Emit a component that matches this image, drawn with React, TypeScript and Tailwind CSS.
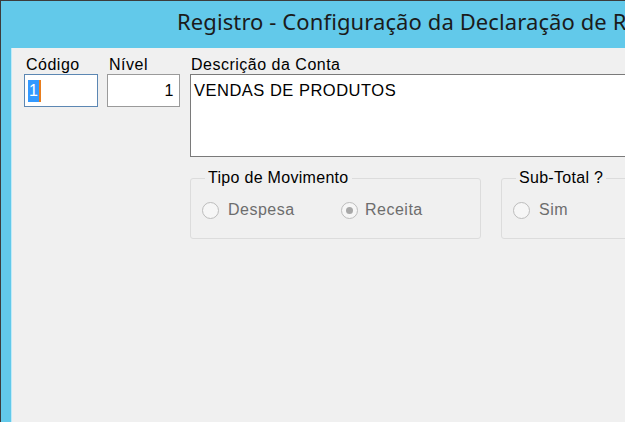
export default function App() {
  const radio = (checked: boolean) => (
    <span className="w-[17px] h-[17px] rounded-full border border-[#bcbcbc] bg-[#f6f6f6] flex items-center justify-center shrink-0">
      {checked && <span className="w-[7px] h-[7px] rounded-full bg-[#a8a8a8]" />}
    </span>
  );
  return (
    <div className="w-[625px] h-[422px] overflow-hidden bg-[#62c9ea] border-l border-t border-[#3c3c3c] flex flex-col">
      <div className="h-[47px] shrink-0 pl-[176px] pt-[6px] whitespace-nowrap overflow-hidden text-[22px] tracking-[0.1px] leading-[29px] text-[#1b1b1b] font-['Noto_Sans',sans-serif]">
        Registro - Configuração da Declaração de Resultado
      </div>
      <div className="flex-1 ml-[10px] border-l border-[#bfeaf8] bg-[#f0f0f0] pl-[12px] pt-[7px] font-['Liberation_Sans',Arial,sans-serif] text-[16px] tracking-[0.5px] text-black">
        <div className="flex items-start">
          <div className="w-[74px] flex flex-col shrink-0">
            <span className="h-[19px] leading-[19px] pl-[2px]">Código</span>
            <div className="h-[33px] border border-[#5c87b3] bg-white flex items-center pl-[3px]">
              <span className="bg-[#3399ff] text-white leading-[22px] px-[1px]">1</span>
              <span className="w-[2px] h-[22px] bg-[#e87d1e]" />
            </div>
          </div>
          <div className="w-[73px] ml-[9px] flex flex-col shrink-0">
            <span className="h-[19px] leading-[19px] pl-[2px]">Nível</span>
            <div className="h-[33px] border border-[#9a9a9a] bg-white flex items-center justify-end pr-[5px]">
              <span className="leading-[22px]">1</span>
            </div>
          </div>
          <div className="flex-1 ml-[10px] flex flex-col min-w-0">
            <span className="h-[19px] leading-[19px] pl-[1px] whitespace-nowrap">Descrição da Conta</span>
            <div className="h-[83px] w-[460px] border border-[#7a7a7a] bg-white pl-[3px] pt-[4px] whitespace-nowrap">
              <span className="leading-[20px] text-[16.5px]">VENDAS DE PRODUTOS</span>
            </div>
          </div>
        </div>
        <div className="flex ml-[166px] mt-[12px] gap-[20px]">
          <fieldset className="w-[291px] h-[70px] border border-[#dcdcdc] rounded-[3px] pl-[11px] shrink-0">
            <legend className="px-[3px] ml-[3px] leading-[18px] tracking-[0.3px]">Tipo de Movimento</legend>
            <div className="flex items-center mt-[13px] text-[#6d6d6d]">
              <div className="w-[139px] flex items-center shrink-0">
                {radio(false)}
                <span className="ml-[9px] leading-[20px]">Despesa</span>
              </div>
              {radio(true)}
              <span className="ml-[7px] leading-[20px]">Receita</span>
            </div>
          </fieldset>
          <fieldset className="w-[200px] h-[70px] border border-[#dcdcdc] rounded-[3px] pl-[11px] shrink-0">
            <legend className="px-[3px] ml-[3px] leading-[18px] tracking-[0.3px]">Sub-Total ?</legend>
            <div className="flex items-center mt-[13px] text-[#6d6d6d]">
              {radio(false)}
              <span className="ml-[9px] leading-[20px]">Sim</span>
            </div>
          </fieldset>
        </div>
      </div>
    </div>
  );
}
